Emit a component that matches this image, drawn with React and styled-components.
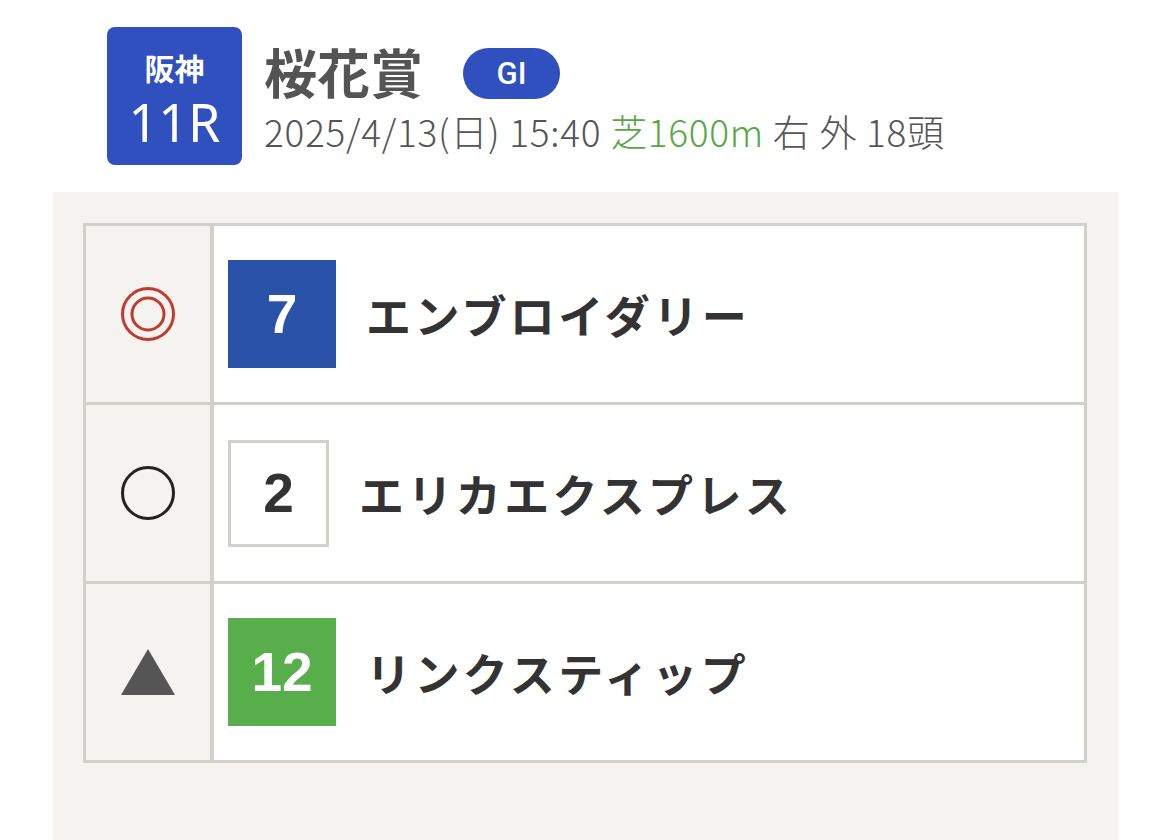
import React from "react";
import styled, { createGlobalStyle } from "styled-components";

const Global = createGlobalStyle`
  html, body { margin: 0; padding: 0; background: #ffffff; }
  body { font-family: "Noto Sans CJK JP", "Noto Sans", sans-serif; color: #333; }
`;

const Page = styled.div`
  width: 1170px;
  height: 840px;
  overflow: hidden;
`;

const Header = styled.header`
  display: flex;
  align-items: flex-start;
  padding: 27px 0 0 107px;
  gap: 22px;
`;

const Venue = styled.div`
  width: 135px;
  height: 138px;
  box-sizing: border-box;
  border-radius: 8px;
  background: #3050c0;
  color: #fff;
  display: flex;
  flex-direction: column;
  align-items: center;
  padding-top: 23px;
`;

const VenueName = styled.div`
  font-family: "Noto Sans CJK JP", sans-serif;
  font-weight: 700;
  font-size: 30px;
  line-height: 34px;
`;

const RaceNo = styled.div`
  font-family: "Noto Sans", "Noto Sans CJK JP", sans-serif;
  font-weight: 400;
  font-size: 52px;
  line-height: 46px;
  margin-top: 15px;
`;

const Info = styled.div`
  display: flex;
  flex-direction: column;
  padding-top: 15px;
`;

const TitleRow = styled.div`
  display: flex;
  align-items: center;
  gap: 40px;
  height: 58px;
`;

const Title = styled.h1`
  margin: 0;
  font-family: "Noto Sans CJK JP", sans-serif;
  font-weight: 700;
  font-size: 53px;
  line-height: 58px;
  color: #545454;
`;

const Grade = styled.span`
  display: inline-flex;
  align-items: center;
  justify-content: center;
  width: 97px;
  height: 51px;
  border-radius: 26px;
  background: #3050c0;
  color: #fff;
  font-family: Roboto, "Noto Sans", sans-serif;
  font-weight: 500;
  font-size: 31px;
  margin-top: 4px;
`;

const Meta = styled.div`
  font-family: "Noto Sans CJK JP", sans-serif;
  font-weight: 300;
  font-size: 37px;
  line-height: 44px;
  letter-spacing: 0.7px;
  color: #555;
  white-space: nowrap;
  margin-top: 9px;
`;

const Turf = styled.span`
  color: #56a845;
`;

const Panel = styled.section`
  margin: 27px 0 0 53px;
  width: 1065px;
  height: 700px;
  box-sizing: border-box;
  background: #f4f3f0;
  padding: 31px 31px 0 30px;
`;

const Table = styled.div`
  width: 1004px;
  box-sizing: border-box;
  border: 3px solid #d3d0cb;
  background: #fff;
`;

const Row = styled.div`
  display: grid;
  grid-template-columns: 128px 1fr;
  height: 176px;
  & + & {
    border-top: 3px solid #d3d0cb;
  }
`;

const MarkCell = styled.div`
  background: #f4f3f0;
  border-right: 4px solid #d3d0cb;
  display: flex;
  align-items: center;
  justify-content: center;
`;

const HorseCell = styled.div`
  display: flex;
  align-items: center;
  padding-left: 14px;
  gap: 30px;
`;

const NumBox = styled.div`
  box-sizing: border-box;
  width: ${(p) => (p.$outlined ? "101px" : "108px")};
  height: ${(p) => (p.$outlined ? "107px" : "108px")};
  background: ${(p) => p.$bg};
  border: ${(p) => (p.$outlined ? "3px solid #d3d0cb" : "none")};
  color: ${(p) => (p.$outlined ? "#333" : "#fff")};
  display: flex;
  align-items: center;
  justify-content: center;
  font-family: "Liberation Sans", Arial, sans-serif;
  font-weight: 700;
  font-size: 55px;
`;

const HorseName = styled.div`
  font-family: "Noto Sans CJK JP", sans-serif;
  font-weight: 700;
  font-size: 45px;
  letter-spacing: 3.4px;
  color: #333;
  line-height: 1;
`;

const DoubleCircle = () => (
  <svg width="56" height="56" viewBox="0 0 56 56">
    <circle cx="28" cy="28" r="25.5" fill="none" stroke="#c23a2c" strokeWidth="3" />
    <circle cx="28" cy="28" r="16" fill="none" stroke="#c23a2c" strokeWidth="3" />
  </svg>
);

const Circle = () => (
  <svg width="56" height="56" viewBox="0 0 56 56">
    <circle cx="28" cy="28" r="25.5" fill="none" stroke="#222" strokeWidth="3" />
  </svg>
);

const Triangle = () => (
  <svg width="56" height="48" viewBox="0 0 56 48">
    <polygon points="28,1 55,47 1,47" fill="#555" />
  </svg>
);

const rows = [
  { mark: <DoubleCircle />, num: 7, bg: "#2b52a9", name: "エンブロイダリー" },
  { mark: <Circle />, num: 2, bg: "#fff", outlined: true, name: "エリカエクスプレス" },
  { mark: <Triangle />, num: 12, bg: "#58ae4a", name: "リンクスティップ" },
];

export default function App() {
  return (
    <Page>
      <Global />
      <Header>
        <Venue>
          <VenueName>阪神</VenueName>
          <RaceNo>11R</RaceNo>
        </Venue>
        <Info>
          <TitleRow>
            <Title>桜花賞</Title>
            <Grade>GI</Grade>
          </TitleRow>
          <Meta>
            2025/4/13(日) 15:40 <Turf>芝1600m</Turf> 右 外 18頭
          </Meta>
        </Info>
      </Header>
      <Panel>
        <Table>
          {rows.map((r) => (
            <Row key={r.num}>
              <MarkCell>{r.mark}</MarkCell>
              <HorseCell>
                <NumBox $bg={r.bg} $outlined={r.outlined}>
                  {r.num}
                </NumBox>
                <HorseName>{r.name}</HorseName>
              </HorseCell>
            </Row>
          ))}
        </Table>
      </Panel>
    </Page>
  );
}
